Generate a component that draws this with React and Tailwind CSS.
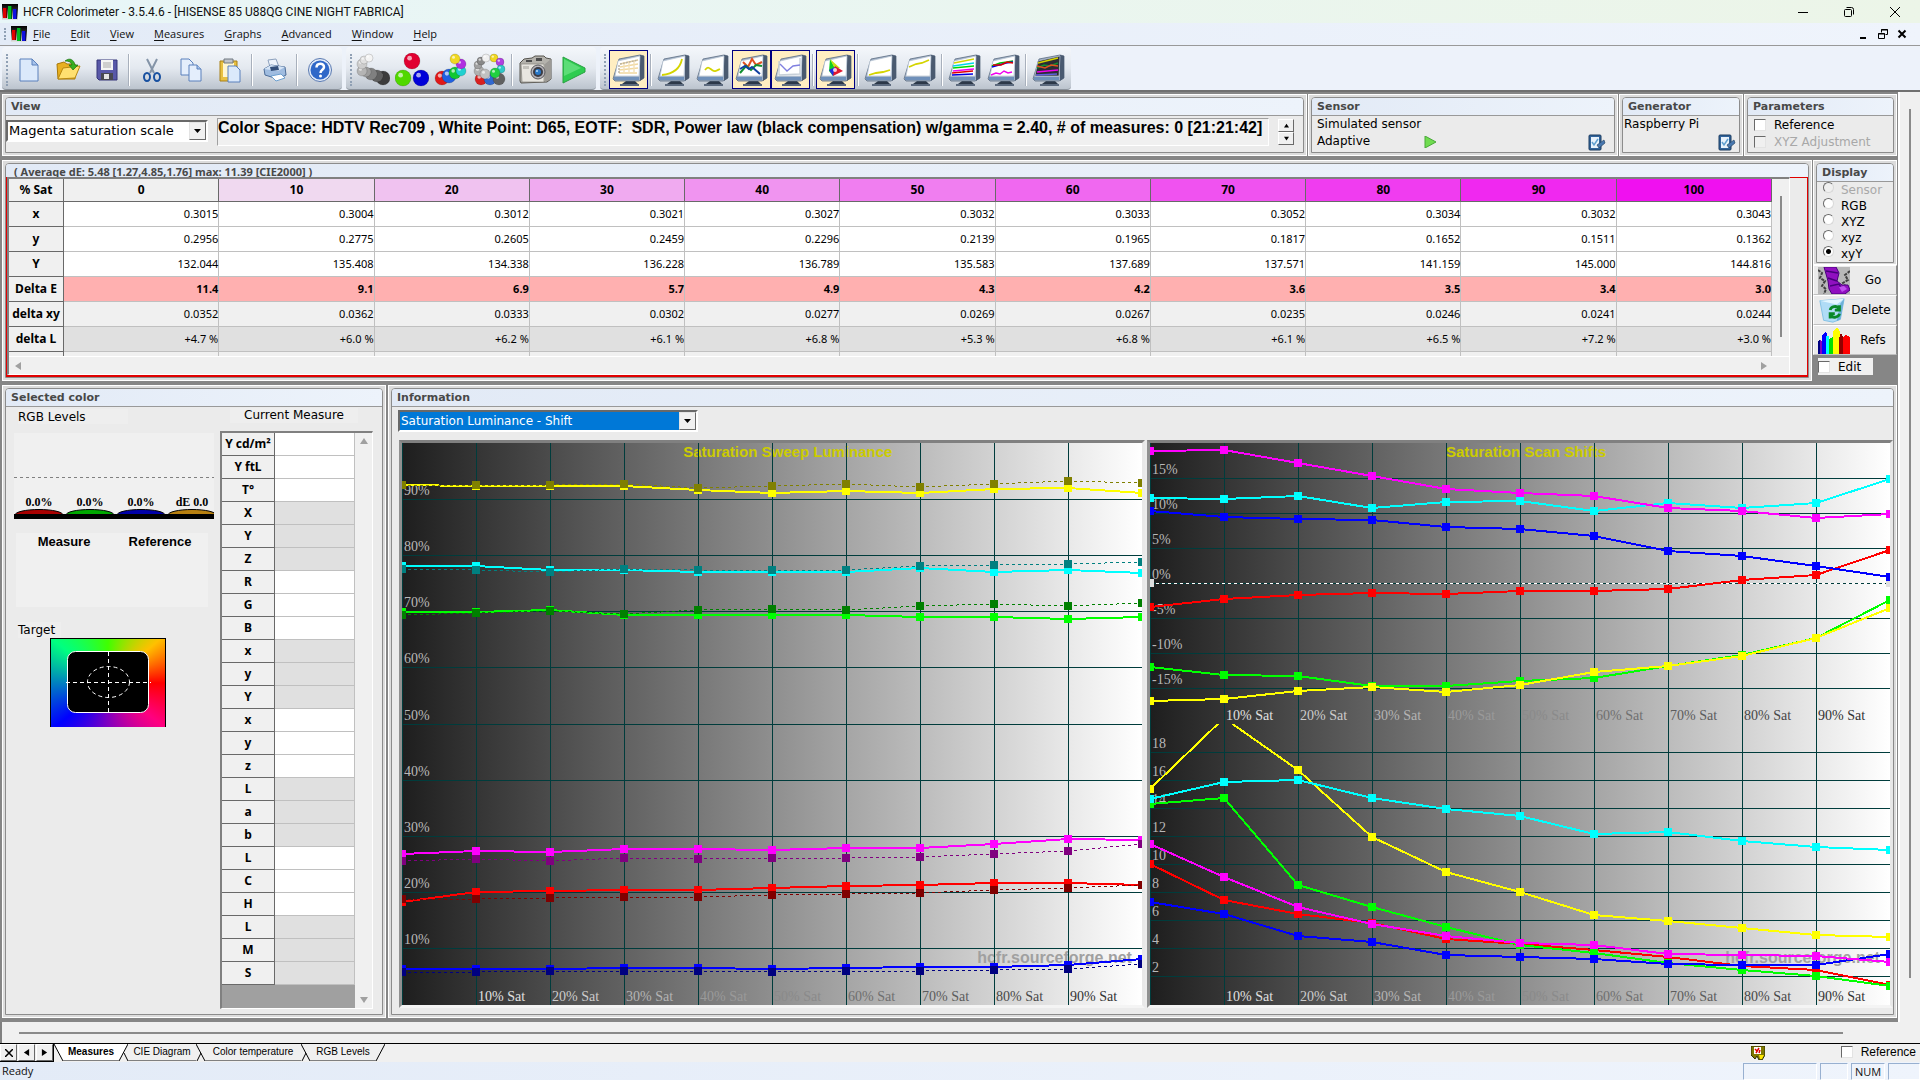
import { useState } from 'react';

const MEASURE_COLS = [
  { sat: 0, bg: 'bg-[#f0f0f0]', x: '0.3015', y: '0.2956', Y: '132.044', dE: '11.4', dxy: '0.0352', dL: '+4.7 %' },
  { sat: 10, bg: 'bg-[#f0d9f0]', x: '0.3004', y: '0.2775', Y: '135.408', dE: '9.1', dxy: '0.0362', dL: '+6.0 %' },
  { sat: 20, bg: 'bg-[#f0c2f0]', x: '0.3012', y: '0.2605', Y: '134.338', dE: '6.9', dxy: '0.0333', dL: '+6.2 %' },
  { sat: 30, bg: 'bg-[#f0aaf0]', x: '0.3021', y: '0.2459', Y: '136.228', dE: '5.7', dxy: '0.0302', dL: '+6.1 %' },
  { sat: 40, bg: 'bg-[#f094f0]', x: '0.3027', y: '0.2296', Y: '136.789', dE: '4.9', dxy: '0.0277', dL: '+6.8 %' },
  { sat: 50, bg: 'bg-[#f07ef0]', x: '0.3032', y: '0.2139', Y: '135.583', dE: '4.3', dxy: '0.0269', dL: '+5.3 %' },
  { sat: 60, bg: 'bg-[#f068f0]', x: '0.3033', y: '0.1965', Y: '137.689', dE: '4.2', dxy: '0.0267', dL: '+6.8 %' },
  { sat: 70, bg: 'bg-[#f052f0]', x: '0.3052', y: '0.1817', Y: '137.571', dE: '3.6', dxy: '0.0235', dL: '+6.1 %' },
  { sat: 80, bg: 'bg-[#f03cf0]', x: '0.3034', y: '0.1652', Y: '141.159', dE: '3.5', dxy: '0.0246', dL: '+6.5 %' },
  { sat: 90, bg: 'bg-[#f028f0]', x: '0.3032', y: '0.1511', Y: '145.000', dE: '3.4', dxy: '0.0241', dL: '+7.2 %' },
  { sat: 100, bg: 'bg-[#f010f0]', x: '0.3043', y: '0.1362', Y: '144.816', dE: '3.0', dxy: '0.0244', dL: '+3.0 %' },
];

const MEASURE_ROWS = [
  { key: 'x', label: 'x', cls: 'bg-white' },
  { key: 'y', label: 'y', cls: 'bg-white' },
  { key: 'Y', label: 'Y', cls: 'bg-white' },
  { key: 'dE', label: 'Delta E', cls: 'bg-[#ffb0b0] font-bold' },
  { key: 'dxy', label: 'delta xy', cls: 'bg-[#f0f0f0]' },
  { key: 'dL', label: 'delta L', cls: 'bg-[#e0e0e0]' },
];

const CURRENT_ROWS = ['Y cd/m²', 'Y ftL', 'T°', 'X', 'Y', 'Z', 'R', 'G', 'B', 'x', 'y', 'Y', 'x', 'y', 'z', 'L', 'a', 'b', 'L', 'C', 'H', 'L', 'M', 'S'];

const AXIS_COLORS = ['#e0e0e0', '#cccccc', '#b4b4b4', '#9a9a9a', '#8a8a8a', '#707070', '#5c5c5c', '#484848', '#333333'];

const LUMINANCE = [
  { color: '#ffff00', pts: [42, 43, 43, 43, 47, 50, 48, 50, 46, 45, 50] },
  { color: '#808000', dash: true, pts: [42, 42, 42, 41, 45, 43, 41, 44, 41, 38, 40] },
  { color: '#00ffff', pts: [123, 123, 127, 127, 129, 129, 129, 125, 129, 127, 130] },
  { color: '#008080', dash: true, pts: [126, 127, 129, 126, 127, 127, 127, 123, 122, 121, 119] },
  { color: '#00ff00', pts: [169, 169, 167, 172, 172, 172, 172, 174, 174, 176, 174] },
  { color: '#008000', dash: true, pts: [172, 170, 168, 171, 167, 166, 167, 163, 161, 163, 160] },
  { color: '#ff00ff', pts: [411, 408, 409, 406, 406, 407, 405, 405, 401, 396, 397] },
  { color: '#800080', dash: true, pts: [418, 416, 418, 415, 416, 415, 415, 414, 411, 408, 401] },
  { color: '#ff0000', pts: [459, 449, 448, 447, 447, 445, 443, 442, 440, 440, 442] },
  { color: '#800000', dash: true, pts: [456, 456, 455, 454, 454, 452, 451, 450, 447, 445, 442] },
  { color: '#0000ff', pts: [526, 526, 526, 525, 525, 526, 525, 524, 524, 522, 516] },
  { color: '#000080', dash: true, pts: [529, 529, 528, 528, 528, 529, 528, 528, 527, 526, 521] },
];

const SHIFTS = [
  { color: '#ff0000', pts: [164, 156, 152, 150, 151, 148, 148, 146, 137, 132, 107] },
  { color: '#00ff00', pts: [224, 232, 233, 243, 243, 238, 235, 223, 212, 195, 157] },
  { color: '#0000ff', pts: [68, 74, 76, 77, 84, 86, 93, 108, 113, 123, 134] },
  { color: '#ffff00', pts: [258, 256, 248, 244, 249, 242, 229, 223, 213, 195, 165] },
  { color: '#00ffff', pts: [55, 56, 53, 65, 59, 58, 68, 60, 65, 60, 36] },
  { color: '#ff00ff', pts: [8, 7, 20, 33, 46, 50, 53, 65, 68, 75, 71] },
];

const DELTA_E = [
  { color: '#ff0000', pts: [140, 176, 190, 199, 215, 220, 226, 233, 242, 246, 261] },
  { color: '#00ff00', pts: [80, 74, 161, 183, 203, 221, 229, 239, 246, 252, 262] },
  { color: '#0000ff', pts: [178, 190, 212, 218, 231, 233, 235, 240, 241, 241, 230] },
  { color: '#ffff00', pts: [65, -6, 46, 113, 148, 168, 191, 197, 204, 211, 213] },
  { color: '#00ffff', pts: [75, 58, 56, 74, 85, 92, 110, 108, 117, 123, 126] },
  { color: '#ff00ff', pts: [120, 153, 183, 200, 212, 219, 221, 230, 231, 232, 238] },
];

const LUM_GRID = [90, 80, 70, 60, 50, 40, 30, 20, 10].map((v, i) => ({ label: `${v}%`, y: 56 * (i + 1) + (i > 3 ? 1 : 0) }));
const SHIFT_GRID = [15, 10, 5, 0, -5, -10, -15].map((v, i) => ({ label: `${v}%`, y: 35 + 35 * i }));
const DE_GRID = [18, 16, 14, 12, 10, 8, 6, 4, 2].map((v, i) => ({ label: `${v}`, y: 28 + 28 * i }));

/* ---------- charts ---------- */

function Series({ color, dash, pts }) {
  return (
    <g fill={color} stroke={color} shapeRendering="crispEdges">
      {pts.slice(1).map((y, i) => (
        <line
          key={i}
          x1={`${i * 10}%`}
          y1={pts[i]}
          x2={`${(i + 1) * 10}%`}
          y2={y}
          strokeWidth={dash ? 1 : 2}
          strokeDasharray={dash ? '3 3' : undefined}
        />
      ))}
      {pts.map((y, i) => (
        <rect key={i} x={`${i * 10}%`} y={y - 4} width="8" height="8" stroke="none" transform="translate(-4 0)" />
      ))}
    </g>
  );
}

function Plot({ title, titleX, grid, series, height, zeroLine, watermark, id, label }) {
  return (
    <svg className="block w-full" height={height} role="img" aria-label={label}>
      <defs>
        <linearGradient id={id}>
          <stop offset="0" stopColor="#1e1e1e" />
          <stop offset="1" stopColor="#ffffff" />
        </linearGradient>
      </defs>
      <rect width="100%" height="100%" fill={`url(#${id})`} />
      {title && (
        <text x={titleX} y="14" fill="#cccc00" className="font-['Liberation_Sans',sans-serif] text-[15px] font-bold">
          {title}
        </text>
      )}
      {watermark && (
        <text x="78%" y={height - 42} dx="-2" fill="#a0a0a0" className="font-['Liberation_Sans',sans-serif] text-base font-bold">
          hcfr.sourceforge.net
        </text>
      )}
      <g stroke="#003c3c" shapeRendering="crispEdges">
        {[0, 1, 2, 3, 4, 5, 6, 7, 8, 9].map((i) => (
          <line key={i} x1={`${i * 10}%`} x2={`${i * 10}%`} y1="0" y2={height} />
        ))}
        {grid.map((g) => (
          <line key={g.label} x1="0" x2="100%" y1={g.y} y2={g.y} />
        ))}
      </g>
      {zeroLine && (
        <g shapeRendering="crispEdges">
          <line x1="0" x2="100%" y1={zeroLine} y2={zeroLine} stroke="#ffffff" strokeDasharray="3 3" />
          <rect x="0" y={zeroLine - 4} width="4" height="8" fill="#e0e0e0" />
          <rect x="100%" y={zeroLine - 4} width="4" height="8" fill="#e0e0e0" transform="translate(-4 0)" />
        </g>
      )}
      <g className="font-['Liberation_Serif',serif] text-sm">
        {grid.map((g) => (
          <text key={g.label} x="2" y={g.y - 4} fill="#b8b8b8">
            {g.label}
          </text>
        ))}
        {AXIS_COLORS.map((c, i) => (
          <text key={c} x={`${(i + 1) * 10}%`} dx="2" y={height - 4} fill={c}>
            {`${(i + 1) * 10}% Sat`}
          </text>
        ))}
      </g>
      {series.map((s) => (
        <Series key={s.color} {...s} />
      ))}
    </svg>
  );
}

/* ---------- small building blocks ---------- */

function Panel({ title, className = '', bodyClass = '', children }) {
  return (
    <section className={`flex flex-col border border-white bg-[#dcdcdc] p-[2px] ${className}`}>
      <div className="flex flex-1 flex-col rounded-t-[4px] border border-[#8c8c8c] bg-[#ebebeb]">
        <h2 className="h-[18px] rounded-t-[3px] border-b border-[#999] bg-gradient-to-r from-[#e2eaf6] to-[#edf3fb] pl-[5px] text-[11px] leading-[18px] font-bold text-[#484848]">
          {title}
        </h2>
        <div className={`flex-1 ${bodyClass}`}>{children}</div>
      </div>
    </section>
  );
}

function CheckBox({ label, disabled, className = '' }) {
  return (
    <label className={`flex items-center gap-2 ${disabled ? 'text-[#a8a8a8]' : ''} ${className}`}>
      <input
        type="checkbox"
        disabled={disabled}
        className={`h-3 w-3 shrink-0 appearance-none border border-t-[#696969] border-r-[#e3e3e3] border-b-[#e3e3e3] border-l-[#696969] ${disabled ? 'bg-[#f0f0f0]' : 'bg-white checked:bg-[#404040]'}`}
      />
      {label}
    </label>
  );
}

function Combo({ label, options, className = '', selectClass = '' }) {
  return (
    <div className={`relative h-[22px] border-2 border-t-[#696969] border-r-white border-b-white border-l-[#696969] bg-white ${className}`}>
      <select aria-label={label} className={`block h-[18px] w-full appearance-none leading-[18px] outline-none ${selectClass}`}>
        {options.map((o) => (
          <option key={o}>{o}</option>
        ))}
      </select>
      <span className="pointer-events-none absolute top-0 right-0 flex h-[18px] w-[17px] items-center justify-center border border-t-[#e3e3e3] border-r-[#696969] border-b-[#696969] border-l-[#e3e3e3] bg-[#f0f0f0]">
        <svg width="7" height="4" viewBox="0 0 7 4">
          <path d="M0 0h7L3.500 4z" />
        </svg>
      </span>
    </div>
  );
}

function Arrow({ dir, color = '#a0a0a0', size = 8 }) {
  const d = {
    left: 'M7 0v8L1 4z',
    right: 'M1 0v8l6-4z',
    up: 'M0 7h8L4 1z',
    down: 'M0 1h8L4 7z',
  }[dir];
  return (
    <svg width={size} height={size} viewBox="0 0 8 8" fill={color}>
      <path d={d} />
    </svg>
  );
}

/* ---------- icons ---------- */

function AppLogo({ id }) {
  return (
    <svg width="16" height="16" viewBox="0 0 16 16">
      <defs>
        <linearGradient id={id} x1="0" y1="0" x2="0" y2="1">
          <stop offset="0" stopColor="#000" />
          <stop offset=".3" stopColor="#222" />
          <stop offset="1" stopColor="#e8e8e8" />
        </linearGradient>
      </defs>
      <rect width="16" height="16" fill={`url(#${id})`} />
      <path d="M1 4h4v10H1z" fill="#e00000" />
      <path d="M6 2h4v13H6z" fill="#00b820" />
      <path d="M11 5h4v10h-4z" fill="#1010e0" />
      <path d="M4 4h1v10H4zM9 2h1v13H9zM14 5h1v10h-1z" fill="#000" opacity=".5" />
    </svg>
  );
}

function Spheres({ balls }) {
  return (
    <svg width="34" height="34" viewBox="0 0 34 34">
      {balls.map(([cx, cy, r, c], i) => (
        <g key={i}>
          <circle cx={cx} cy={cy} r={r} fill={c} stroke="#000" strokeOpacity=".25" strokeWidth=".6" />
          <circle cx={cx - r * 0.3} cy={cy - r * 0.35} r={r * 0.3} fill="#fff" opacity=".65" />
        </g>
      ))}
    </svg>
  );
}

const GRAY_BALLS = [[27, 25, 7, '#3c3c3c'], [21, 23, 6, '#606060'], [15, 21, 6, '#808080'], [10, 19, 5, '#9c9c9c'], [6, 18, 5, '#b4b4b4'], [6, 11, 5, '#cdcdcd'], [8, 7, 4, '#e0e0e0'], [13, 5, 4, '#f4f4f4']];
const RGB_BALLS = [[17, 8, 8, '#e00030'], [8, 25, 8, '#50d800'], [26, 25, 8, '#0000d8']];
const COLOR_BALLS = [[8, 25, 7, '#e01818'], [15, 23, 7, '#2060e0'], [21, 20, 6, '#10c830'], [27, 18, 5, '#20d0d0'], [27, 11, 5, '#b030e0'], [21, 6, 5, '#f0d820']];
const RING_BALLS = [[8, 26, 6, '#d82020'], [17, 26, 6, '#3068d0'], [26, 26, 6, '#606060'], [6, 18, 5, '#b0b0b0'], [5, 12, 4, '#a0a0a0'], [8, 8, 4, '#888888'], [13, 5, 4, '#f0f0f0'], [21, 5, 4, '#f0d820'], [27, 9, 4, '#b040e0'], [28, 16, 4, '#30c8c8'], [22, 20, 5, '#20d040'], [12, 21, 5, '#c0c0c0']];

function Monitor({ dark, children }) {
  return (
    <svg width="34" height="34" viewBox="0 0 34 34">
      <path d="M10 31h16l-3-3h-9z" fill="#2c3848" />
      <path d="M8 31h19v2H8z" fill="#5c6a7e" />
      <path d="M7 6L28 2l4 1v22l-5 3H3L1 26z" fill="#9fb0c6" stroke="#5c6c82" strokeWidth=".8" />
      <path d="M28 2l4 1v22l-4 3z" fill="#4a5a70" />
      <path d="M2 24h25v3H2z" fill="#6f90ba" />
      <path d="M6 8l22-5-1 20H3z" fill={dark ? '#2c2c34' : '#ffffff'} stroke="#b8c4d2" strokeWidth=".7" />
      <g fill="none" strokeWidth="1.400">{children}</g>
    </svg>
  );
}

const monitorArt = {
  measures: (
    <>
      <path d="M8 11l18-4M8 14l18-3M7 17l19-2M7 20h18" stroke="#f0d8a0" />
      <path d="M12 9v12M17 8v12M22 7v13" stroke="#f4e2b8" />
      <path d="M8 11l18-4M7 12v9" stroke="#b8b0a0" strokeDasharray="2 1" />
    </>
  ),
  luminance: <path d="M5 22c10-1 18-6 20-16" stroke="#d4d400" strokeWidth="1.800" />,
  gamma: <path d="M9 17c3-4 4-2 7 0s4 1 8-1" stroke="#d4d400" strokeWidth="1.800" />,
  rgb: (
    <>
      <path d="M8 9l5 5 4-8 4 6 6-3" stroke="#e05020" strokeWidth="2" />
      <path d="M5 20l6-7 5 4 5-5 6 1" stroke="#109030" strokeWidth="2" />
      <path d="M5 16l5-3 4 3 3-2 8 7" stroke="#1040a0" strokeWidth="2" />
    </>
  ),
  temp: (
    <>
      <path d="M5 22V8m0 14l21-1V5" stroke="#c8d0d8" />
      <path d="M6 11l5 5 2 2 6-5 7-1" stroke="#8080e0" />
    </>
  ),
  nearBlack: <path d="M5 22l7-2 7-1 7-2" stroke="#d4d400" strokeWidth="1.800" />,
  nearWhite: <path d="M6 14l7-3 6-1 7-3" stroke="#d4d400" strokeWidth="1.800" />,
  lumAll: (
    <>
      <path d="M6 10l20-4" stroke="#d4d400" />
      <path d="M5 13l21-3" stroke="#00d8e8" />
      <path d="M5 15l21-2" stroke="#00d800" />
      <path d="M5 18l21-2" stroke="#f000f0" />
      <path d="M4 20l21-2" stroke="#e00000" />
      <path d="M4 22l21-1" stroke="#0000e0" />
    </>
  ),
  shiftAll: (
    <>
      <path d="M5 13l8-3 7-1 6-1" stroke="#00c000" />
      <path d="M5 14l7-2 7-2 7-1" stroke="#0000e0" />
      <path d="M6 12l8 0 6-3 6 1" stroke="#e00000" />
      <path d="M4 22l5-2 4 1 4-3 4 2 4-1" stroke="#f000f0" />
    </>
  ),
  combo: (
    <>
      <path d="M6 10l20-5" stroke="#d4d400" />
      <path d="M5 15l7-3 6 1 8-3" stroke="#109030" />
      <path d="M5 13l8 2 6-3 7 1" stroke="#e05020" />
      <path d="M5 19l21-2" stroke="#f000f0" />
      <path d="M4 22l21-1" stroke="#6060e0" />
    </>
  ),
};

function CieMonitor() {
  return (
    <Monitor>
      <path d="M11 6l-1 12 4 5 2-8z" fill="#10d020" stroke="none" />
      <path d="M11 6l10 9-5 1z" fill="#c8e010" stroke="none" />
      <path d="M10 17l4 6 4-4-2-5z" fill="#2030e0" stroke="none" />
      <path d="M16 13l8 5-10 5z" fill="#e01830" stroke="none" />
      <circle cx="16" cy="17" r="2" fill="#fff" opacity=".8" stroke="none" />
    </Monitor>
  );
}

const fileIcons = {
  New: (
    <svg width="22" height="26" viewBox="0 0 22 26">
      <path d="M2 2h12l6 6v16H2z" fill="#dbe9fb" stroke="#5a80bc" />
      <path d="M14 2l6 6h-6z" fill="#a8c4ec" stroke="#5a80bc" />
    </svg>
  ),
  Open: (
    <svg width="26" height="26" viewBox="0 0 26 26">
      <path d="M2 7l7-2 3 2h8v15H3z" fill="#e8b020" stroke="#a87808" />
      <path d="M3 22l5-11 17-2-5 12z" fill="#ffe070" stroke="#b88810" />
      <path d="M10 4c5-4 9-1 10 4h3l-5 5-4-5h3c-1-3-3-4-7-4z" fill="#38b020" stroke="#187010" strokeWidth=".7" />
    </svg>
  ),
  Save: (
    <svg width="24" height="24" viewBox="0 0 24 24">
      <path d="M2 2h20v20H4l-2-2z" fill="#5858a8" stroke="#343478" />
      <path d="M6 2h12v10H6z" fill="#f4f4f4" />
      <path d="M8 5h8M8 7h8M8 9h8" stroke="#a8a8a8" />
      <path d="M6 15h12v7H6z" fill="#484850" />
      <path d="M9 16h5v5H9z" fill="#e4e4e4" />
    </svg>
  ),
  Cut: (
    <svg width="20" height="26" viewBox="0 0 20 26" fill="none">
      <path d="M5 2l7 14M15 2L8 16" stroke="#8494a8" strokeWidth="2" />
      <ellipse cx="5" cy="20" rx="3" ry="4" stroke="#1850a0" strokeWidth="2" />
      <ellipse cx="15" cy="20" rx="3" ry="4" stroke="#1850a0" strokeWidth="2" />
    </svg>
  ),
  Copy: (
    <svg width="24" height="26" viewBox="0 0 24 26" fill="#e4eefc" stroke="#5a80bc">
      <path d="M2 2h8l4 4v12H2z" />
      <path d="M10 8h8l4 4v12H10z" />
      <path d="M18 8v4h4" fill="#a8c4ec" />
    </svg>
  ),
  Paste: (
    <svg width="24" height="26" viewBox="0 0 24 26">
      <path d="M2 4h17v20H2z" fill="#e8c040" stroke="#a88018" />
      <path d="M5 6h11v14H5z" fill="#fff6d0" />
      <path d="M6 2h9v4H6z" fill="#c0c4cc" stroke="#707880" />
      <path d="M10 9h8l4 4v12H10z" fill="#dbe9fb" stroke="#5a80bc" />
    </svg>
  ),
  Print: (
    <svg width="26" height="24" viewBox="0 0 26 24">
      <path d="M6 2l8-1 3 8H8z" fill="#eef4fc" stroke="#8ca0bc" />
      <path d="M2 11l7-4 14 2 1 8-8 4-13-4z" fill="#9fbce0" stroke="#4c6c98" />
      <path d="M2 11l7-4 14 2-7 4z" fill="#d4e4f6" />
      <path d="M8 9l8-1 1 4-8 1z" fill="#34507c" />
      <path d="M9 18l10-2 4 4-9 3z" fill="#fff" stroke="#6ca0d0" />
    </svg>
  ),
  Help: (
    <svg width="26" height="26" viewBox="0 0 26 26">
      <circle cx="13" cy="13" r="11.500" fill="#e4ecf8" stroke="#5878b0" />
      <circle cx="13" cy="13" r="9.500" fill="#3068c8" />
      <path d="M9.500 10.500c0-5 7.500-5 7.500-.5 0 3-3.500 2.500-3.500 6" fill="none" stroke="#fff" strokeWidth="2.500" />
      <circle cx="13.500" cy="19" r="1.500" fill="#fff" />
    </svg>
  ),
  Camera: (
    <svg width="34" height="32" viewBox="0 0 34 32">
      <path d="M2 9l4-4 8-1 3-2h9l2 2 5 1v20l-4 3-26 1-1-2z" fill="#b4b2ac" stroke="#54524c" />
      <path d="M3 10h23v18H4z" fill="#e8e6e0" stroke="#84827c" strokeWidth=".7" />
      <path d="M27 10l6-5v20l-6 3z" fill="#9c9a96" />
      <path d="M8 6h6v2H8zM18 4h6v3h-6z" fill="#4c4c4c" />
      <path d="M5 12h6v3H5z" fill="#c4c2bc" />
      <circle cx="20" cy="18" r="7" fill="#b4b2b8" stroke="#5a5a5e" />
      <circle cx="20" cy="18" r="5" fill="#3c3c44" />
      <circle cx="20" cy="18" r="3" fill="#2878c8" />
      <circle cx="19" cy="17" r="1" fill="#b8dcf8" />
    </svg>
  ),
  Run: (
    <svg width="26" height="28" viewBox="0 0 26 28">
      <path d="M2 1l22 11v4L2 27z" fill="#2ecc50" stroke="#28a040" />
      <path d="M3 3l17 9L3 20z" fill="#70e488" opacity=".7" />
    </svg>
  ),
};

function ToolButton({ name, active, children }) {
  return (
    <button
      aria-label={name}
      className={`flex h-[39px] w-[39px] shrink-0 items-center justify-center ${active ? 'border border-[#000080] bg-[#ffeec2]' : ''}`}
    >
      {children}
    </button>
  );
}

function ToolSep() {
  return (
    <div className="flex h-8 w-[6px] shrink-0 justify-center">
      <div className="w-px bg-[#a8b0bc]" />
      <div className="w-px bg-white" />
    </div>
  );
}

function ToolGroup({ children }) {
  return (
    <div className="flex h-[43px] items-center rounded border-b border-[#8c939c] bg-gradient-to-b from-[#f4f7fb] via-[#e4e9f0] to-[#bcc4ce] pt-[3px] pr-[3px] pl-[4px]">
      <div className="mr-px h-8 border-l-2 border-dotted border-[#90a0b4]" />
      {children}
    </div>
  );
}

function PropsIcon() {
  return (
    <svg width="18" height="18" viewBox="0 0 18 18">
      <rect x="1" y="1" width="12" height="15" rx="1" fill="#30649c" stroke="#1c3c60" />
      <path d="M3 3h8v11H3z" fill="#e8f2fc" />
      <path d="M4 8l2 3 4-6" fill="none" stroke="#60a0d0" strokeWidth="1.500" />
      <path d="M9 11l7-5 1 3-6 5z" fill="#4878b0" stroke="#284868" strokeWidth=".7" />
    </svg>
  );
}

/* ---------- page sections ---------- */

function TitleBar() {
  return (
    <header className="flex h-[23px] items-center bg-gradient-to-r from-[#e8f6f8] to-[#ecf5e8] pr-[19px] pl-[2px] font-[Roboto,'Noto_Sans',sans-serif] text-xs text-[#101010]">
      <AppLogo id="logo-title" />
      <h1 className="ml-[5px] flex-1">HCFR Colorimeter - 3.5.4.6 - [HISENSE 85 U88QG CINE NIGHT FABRICA]</h1>
      <div className="flex gap-[34px]">
        <button aria-label="Minimize">
          <svg width="12" height="12" viewBox="0 0 12 12" stroke="#000"><path d="M1 6.500h10" /></svg>
        </button>
        <button aria-label="Restore">
          <svg width="12" height="12" viewBox="0 0 12 12" fill="none" stroke="#000">
            <rect x="1.500" y="3.500" width="7" height="7" rx="1" />
            <path d="M3.500 1.500h5a2 2 0 0 1 2 2v5" />
          </svg>
        </button>
        <button aria-label="Close">
          <svg width="12" height="12" viewBox="0 0 12 12" stroke="#000"><path d="M1 1l10 10M11 1L1 11" /></svg>
        </button>
      </div>
    </header>
  );
}

function MenuBar() {
  return (
    <nav className="flex h-[23px] items-center border-b border-[#999] bg-gradient-to-r from-[#e3ebf7] to-[#eff4fc] pr-[13px] pl-[4px] text-[#101010]">
      <div className="mr-[5px] h-3 border-l-2 border-dotted border-[#90a0b4]" />
      <AppLogo id="logo-menu" />
      <ul className="ml-[6px] flex flex-1 gap-5 font-['Open_Sans','Noto_Sans',sans-serif] text-[11px]">
        {['File', 'Edit', 'View', 'Measures', 'Graphs', 'Advanced', 'Window', 'Help'].map((m) => (
          <li key={m}>
            <button><u className="underline-offset-2">{m[0]}</u>{m.slice(1)}</button>
          </li>
        ))}
      </ul>
      <div className="flex gap-[9px]">
        <button aria-label="Minimize document">
          <svg width="10" height="10" viewBox="0 0 10 10"><path d="M1 8h6v2H1z" /></svg>
        </button>
        <button aria-label="Restore document">
          <svg width="10" height="10" viewBox="0 0 10 10" fill="none" stroke="#000">
            <path d="M3.500 3.500v-3h6v5h-2M3 1h7" />
            <path d="M.5 4.500h6v5h-6zM0 5h7" />
          </svg>
        </button>
        <button aria-label="Close document">
          <svg width="10" height="10" viewBox="0 0 10 10" stroke="#000" strokeWidth="2"><path d="M1.500 1.500l7 7M8.500 1.500l-7 7" /></svg>
        </button>
      </div>
    </nav>
  );
}

function Toolbar() {
  return (
    <div className="flex h-[44px] gap-[4px] bg-[#edf2fa] pt-px pl-[2px]">
      <ToolGroup>
        <ToolButton name="New">{fileIcons.New}</ToolButton>
        <ToolButton name="Open">{fileIcons.Open}</ToolButton>
        <ToolButton name="Save">{fileIcons.Save}</ToolButton>
        <ToolSep />
        <ToolButton name="Cut">{fileIcons.Cut}</ToolButton>
        <ToolButton name="Copy">{fileIcons.Copy}</ToolButton>
        <ToolButton name="Paste">{fileIcons.Paste}</ToolButton>
        <ToolSep />
        <ToolButton name="Print">{fileIcons.Print}</ToolButton>
        <ToolSep />
        <ToolButton name="Help">{fileIcons.Help}</ToolButton>
      </ToolGroup>
      <ToolGroup>
        <ToolButton name="Measure grays"><Spheres balls={GRAY_BALLS} /></ToolButton>
        <ToolButton name="Measure primaries"><Spheres balls={RGB_BALLS} /></ToolButton>
        <ToolButton name="Measure saturations"><Spheres balls={COLOR_BALLS} /></ToolButton>
        <ToolButton name="Measure all"><Spheres balls={RING_BALLS} /></ToolButton>
        <ToolSep />
        <ToolButton name="Capture">{fileIcons.Camera}</ToolButton>
        <ToolButton name="Run">{fileIcons.Run}</ToolButton>
      </ToolGroup>
      <ToolGroup>
        <div className="w-[2px]" />
        <ToolButton name="Measures view" active><Monitor>{monitorArt.measures}</Monitor></ToolButton>
        <ToolSep />
        <ToolButton name="Luminance"><Monitor>{monitorArt.luminance}</Monitor></ToolButton>
        <ToolButton name="Gamma"><Monitor>{monitorArt.gamma}</Monitor></ToolButton>
        <ToolButton name="RGB levels" active><Monitor>{monitorArt.rgb}</Monitor></ToolButton>
        <ToolButton name="Color temperature" active><Monitor>{monitorArt.temp}</Monitor></ToolButton>
        <ToolSep />
        <ToolButton name="CIE diagram" active><CieMonitor /></ToolButton>
        <ToolSep />
        <ToolButton name="Near black"><Monitor>{monitorArt.nearBlack}</Monitor></ToolButton>
        <ToolButton name="Near white"><Monitor>{monitorArt.nearWhite}</Monitor></ToolButton>
        <ToolSep />
        <ToolButton name="Saturation luminance"><Monitor>{monitorArt.lumAll}</Monitor></ToolButton>
        <ToolButton name="Saturation shift"><Monitor>{monitorArt.shiftAll}</Monitor></ToolButton>
        <ToolSep />
        <ToolButton name="Combined graphs"><Monitor dark>{monitorArt.combo}</Monitor></ToolButton>
      </ToolGroup>
    </div>
  );
}

function TopRow() {
  return (
    <div className="flex h-[62px] gap-px text-xs">
      <Panel title="View" className="min-w-0 flex-1" bodyClass="flex items-start gap-[9px] pt-[2px] pr-[9px]">
        <Combo
          label="View"
          className="mt-[2px] w-[202px] shrink-0"
          selectClass="pl-[1px] text-[13px]"
          options={['Magenta saturation scale', 'Grayscale', 'Primaries and secondaries']}
        />
        <div className="h-7 min-w-0 flex-1 overflow-hidden border border-t-[#a0a0a0] border-r-white border-b-white border-l-[#a0a0a0] bg-[#f0f0f0] font-['Liberation_Sans',Arial,sans-serif] text-base leading-[18px] font-bold whitespace-pre text-black">
          {'Color Space: HDTV Rec709 , White Point: D65, EOTF:  SDR, Power law (black compensation) w/gamma = 2.40, # of measures: 0 [21:21:42]'}
        </div>
        <div className="mt-[1px] flex w-4 flex-col">
          {['up', 'down'].map((d) => (
            <button
              key={d}
              aria-label={`Scroll ${d}`}
              className="flex h-[13px] items-center justify-center border border-t-white border-r-[#696969] border-b-[#696969] border-l-white bg-[#f0f0f0]"
            >
              <Arrow dir={d} color="#000" size={5} />
            </button>
          ))}
        </div>
      </Panel>
      <Panel title="Sensor" className="w-[310px] shrink-0" bodyClass="flex justify-between pr-2 pl-[5px] leading-[17px]">
        <div>
          <p>Simulated sensor</p>
          <p className="flex items-center gap-[54px]">
            Adaptive
            <svg width="13" height="12" viewBox="0 0 13 12"><path d="M1 0l11 6-11 6z" fill="#70dc50" stroke="#48a838" /></svg>
          </p>
        </div>
        <button aria-label="Sensor properties" className="self-end"><PropsIcon /></button>
      </Panel>
      <Panel title="Generator" className="w-[124px] shrink-0" bodyClass="flex justify-between leading-[17px]">
        <p className="pl-[1px] whitespace-nowrap">Raspberry Pi</p>
        <button aria-label="Generator properties" className="self-end pr-[3px]"><PropsIcon /></button>
      </Panel>
      <Panel title="Parameters" className="w-[153px] shrink-0" bodyClass="flex flex-col gap-[1px] pt-[1px] pl-[6px] leading-4">
        <CheckBox label="Reference" />
        <CheckBox label="XYZ Adjustment" disabled />
      </Panel>
    </div>
  );
}

function MeasureTable() {
  return (
    <section className="flex min-w-0 flex-1 flex-col border border-white bg-[#dcdcdc] p-[2px]">
      <div className="flex flex-1 flex-col rounded-t-[4px] border border-[#8c8c8c] bg-[#ebebeb]">
        <h2 className="h-[13px] rounded-t-[3px] bg-gradient-to-r from-[#e2eaf6] to-[#edf3fb] pl-2 font-['Noto_Sans','Open_Sans',sans-serif] text-[11px] leading-[15px] font-bold text-[#484848]">
          ( Average dE: 5.48 [1.27,4.85,1.76] max: 11.39 [CIE2000] )
        </h2>
        <div className="flex-1 border border-b-2 border-[#e00000]">
          <div className="-mt-px mr-[17px] border-t-2 border-r border-b border-l-2 border-t-[#808080] border-r-white border-b-white border-l-[#808080] bg-[#f0f0f0] font-['Noto_Sans','Open_Sans',sans-serif] text-[11px]">
            <div className="flex">
              <div className="h-[177px] min-w-0 flex-1 overflow-hidden">
                <table className="w-full table-fixed border-separate border-spacing-0">
                  <thead>
                    <tr className="h-[23px]">
                      <th className="w-[55px] border-r border-b border-[#696969] bg-[#f0f0f0] text-xs">% Sat</th>
                      {MEASURE_COLS.map((c) => (
                        <th key={c.sat} className={`border-r border-b border-[#696969] text-xs ${c.bg}`}>{c.sat}</th>
                      ))}
                    </tr>
                  </thead>
                  <tbody>
                    {MEASURE_ROWS.map((r) => (
                      <tr key={r.key} className="h-[25px]">
                        <th className="border-r border-b border-[#696969] bg-[#f0f0f0] p-0 text-xs">{r.label}</th>
                        {MEASURE_COLS.map((c) => (
                          <td key={c.sat} className={`border-r border-b border-[#c0c0c0] p-0 text-right ${r.cls}`}>
                            {c[r.key]}
                          </td>
                        ))}
                      </tr>
                    ))}
                    <tr className="h-[25px]">
                      <th className="border-r border-[#696969]" />
                      {MEASURE_COLS.map((c) => (
                        <td key={c.sat} className="border-r border-[#c0c0c0]" />
                      ))}
                    </tr>
                  </tbody>
                </table>
              </div>
              <div className="flex w-[17px] justify-center pt-[17px]">
                <div className="h-[141px] w-[2px] bg-[#8a8a8a]" />
              </div>
            </div>
            <div className="flex h-[18px] items-center justify-between border-t border-white pr-[21px] pl-[5px]">
              <Arrow dir="left" />
              <Arrow dir="right" />
            </div>
          </div>
        </div>
      </div>
    </section>
  );
}

function DisplayColumn() {
  const [mode, setMode] = useState('xyY');
  const btn = 'flex h-[30px] items-center border border-t-white border-r-[#8c8c8c] border-b-[#c0c0c0] border-l-white bg-[#ebebeb] pl-1';
  return (
    <div className="flex w-[84px] shrink-0 flex-col text-xs">
      <Panel title="Display" className="h-[105px]" bodyClass="pl-[6px]">
        {['Sensor', 'RGB', 'XYZ', 'xyz', 'xyY'].map((m) => (
          <label key={m} className={`flex h-4 items-start gap-[7px] leading-4 ${m === 'Sensor' ? 'text-[#a8a8a8]' : ''}`}>
            <input
              type="radio"
              name="display"
              disabled={m === 'Sensor'}
              checked={mode === m}
              onChange={() => setMode(m)}
              className="h-[11px] w-[11px] appearance-none rounded-full border border-t-[#696969] border-r-[#d8d8d8] border-b-[#d8d8d8] border-l-[#696969] bg-white checked:bg-[radial-gradient(circle,#000_2px,#fff_3px)] disabled:bg-[#f0f0f0]"
            />
            {m}
          </label>
        ))}
      </Panel>
      <button className={btn}>
        <svg width="32" height="27" viewBox="0 0 32 27">
          <rect width="32" height="27" fill="#b8b8b8" />
          <path d="M0 3l4 3-2 5 5 3-3 5 4 3-2 5M32 4l-5 4 3 5-5 3 4 5-4 5" fill="none" stroke="#404040" strokeWidth="2" strokeDasharray="3 1" />
          <path d="M6 0h12l3 6-2 8 5 4h6l2 5-5 4H14l-3-5-1-8z" fill="#9010c0" stroke="#48007c" />
          <path d="M8 4l12 2M10 11l9 3M12 19l9-2 4 7" fill="none" stroke="#48007c" strokeWidth="1.500" />
          <path d="M21 20l5-1 3 3-5 3z" fill="#c050f0" />
        </svg>
        <span className="flex-1 text-center">Go</span>
      </button>
      <button className={btn}>
        <svg width="28" height="27" viewBox="0 0 30 27">
          <path d="M2 3l26-2-4 22-8 3-10-2z" fill="#b0dcf6" stroke="#80c0e4" />
          <path d="M2 3l26-2-8 6z" fill="#e4f6ff" />
          <path d="M28 1l-4 22-4 2 4-19z" fill="#6cb0d8" />
          <path
            d="M13 13c1-4 7-5 9-2M23 8v5h-5M23 17c-1 4-7 5-9 2M13 22v-5h5"
            fill="none"
            stroke="#088828"
            strokeWidth="3"
          />
        </svg>
        <span className="flex-1 text-center">Delete</span>
      </button>
      <button className={btn}>
        <svg width="32" height="27" viewBox="0 0 32 27" shapeRendering="crispEdges">
          <path d="M0 14l2-1v14H0z" fill="#000080" />
          <path d="M2 13l3 2v12H2z" fill="#8000c0" />
          <path d="M4 9l4-5 1 4v19H4z" fill="#0000ff" />
          <path d="M8 9h3v18H8z" fill="#00ffff" />
          <path d="M11 12l4-2v17h-4z" fill="#00e000" />
          <path d="M15 5l3-4 3 1 2 6v19h-8z" fill="#ffff00" />
          <path d="M21 12l2-6 2 4v17h-4z" fill="#900000" />
          <path d="M25 10l3-2 4 2v17h-7z" fill="#ff0000" />
        </svg>
        <span className="flex-1 text-center">Refs</span>
      </button>
      <CheckBox label="Edit" className="mt-[3px] ml-[5px] h-[17px] w-[55px] bg-[#f0f0f0]" />
    </div>
  );
}

function RgbLevels() {
  const bars = [
    { t: '0.0%', c: '#a80000' },
    { t: '0.0%', c: '#00a800' },
    { t: '0.0%', c: '#0000a8' },
    { t: 'dE 0.0', c: '#b88010' },
  ];
  return (
    <svg className="mt-[9px] block bg-[#f0f0f0]" width="200" height="86" viewBox="0 0 200 86">
      <path d="M0 44.500h200" stroke="#808080" strokeDasharray="3 3" />
      {bars.map((b, i) => (
        <g key={b.c}>
          <path d={`M${1 + 51 * i} 82a24 5.500 0 0 1 48 0z`} fill={b.c} stroke="#000" />
          <text x={25 + 51 * i} y="73" textAnchor="middle" className="font-['Liberation_Serif',serif] text-xs font-bold">{b.t}</text>
        </g>
      ))}
      <path d="M0 81h200v5H0z" />
    </svg>
  );
}

function SelectedColor() {
  return (
    <Panel title="Selected color" className="w-[384px] shrink-0" bodyClass="flex pr-[9px] pl-2 text-xs">
      <div className="flex flex-col pt-[2px]">
        <p className="ml-1 h-[15px] w-[110px] bg-[#eee] leading-4">RGB Levels</p>
        <RgbLevels />
        <div className="mt-[14px] ml-[2px] grid h-[74px] w-[192px] grid-cols-2 bg-[#f0f0f0] text-center font-['Liberation_Sans',Arial,sans-serif] text-[13px] leading-[17px] font-bold">
          <span>Measure</span>
          <span>Reference</span>
        </div>
        <p className="mt-[15px] ml-1 w-[43px] bg-[#eee] leading-4">Target</p>
        <div className="relative ml-9 h-[89px] w-[116px] border border-b-0 border-black bg-[conic-gradient(from_0deg,#40ff00_0deg,#ffc000_50deg,#ff0000_90deg,#ff0080_128deg,#8000c0_180deg,#0000ff_230deg,#0080c0_270deg,#00ff80_308deg,#40ff00_360deg)]">
          <svg className="absolute inset-0" width="114" height="88" viewBox="0 0 114 88" fill="none" stroke="#fff">
            <rect x="16.500" y="12.500" width="81" height="61" rx="8" fill="#000" />
            <path d="M57.500 13v61M15 43.500h85" strokeDasharray="4 3" />
            <ellipse cx="57.500" cy="43" rx="21" ry="15.500" strokeDasharray="4 3" />
          </svg>
        </div>
      </div>
      <div className="ml-[6px] min-w-0 flex-1">
        <p className="mt-px mr-[15px] ml-[10px] h-[15px] bg-[#eee] text-center leading-[15px]">Current Measure</p>
        <div className="mt-[8px] flex h-[578px] border-t-2 border-r border-b border-l-2 border-t-[#808080] border-r-white border-b-white border-l-[#808080] bg-[#a0a0a0] font-['Noto_Sans','Open_Sans',sans-serif]">
          <div className="flex-1">
            <table className="w-full table-fixed border-separate border-spacing-0">
              <tbody>
                {CURRENT_ROWS.map((r, i) => (
                  <tr key={i} className="h-[23px]">
                    <th className="w-[53px] border-r border-b border-[#696969] bg-[#f0f0f0] p-0 text-xs leading-4 whitespace-nowrap">{r}</th>
                    <td className={`border-r border-b border-[#c0c0c0] ${Math.floor(i / 3) % 2 ? 'bg-[#e0e0e0]' : 'bg-white'}`} />
                  </tr>
                ))}
              </tbody>
            </table>
          </div>
          <div className="flex w-[17px] flex-col items-center justify-between bg-[#f0f0f0] py-[4px]">
            <Arrow dir="up" />
            <Arrow dir="down" />
          </div>
        </div>
      </div>
    </Panel>
  );
}

function Information() {
  const frame = 'min-w-0 flex-1 border-3 border-t-[#808080] border-r-[#e8e8e8] border-b-[#f4f4f4] border-l-[#909090]';
  return (
    <Panel title="Information" className="min-w-0 flex-1" bodyClass="pt-[3px] pb-[6px] text-xs">
      <Combo
        label="Information graph"
        className="ml-[6px] w-[300px]"
        selectClass="border-r-[17px] border-transparent bg-[#0078d7] bg-clip-padding pl-[1px] text-xs text-white"
        options={['Saturation Luminance - Shift', 'Gamma', 'RGB Levels']}
      />
      <div className="mt-[8px] ml-[7px] flex gap-[2px]">
        <div className={frame}>
          <Plot id="lum" label="Saturation sweep luminance" title="Saturation Sweep Luminance" titleX="38%" grid={LUM_GRID} series={LUMINANCE} height={562} watermark />
        </div>
        <div className={frame}>
          <Plot id="shift" label="Saturation scan shifts" title="Saturation Scan Shifts" titleX="40%" grid={SHIFT_GRID} series={SHIFTS} height={281} zeroLine={140} />
          <Plot id="de" label="Saturation delta E" grid={DE_GRID} series={DELTA_E} height={281} watermark />
        </div>
      </div>
    </Panel>
  );
}

/* slanted edge between two sheet tabs */
function TabEdge({ kind }) {
  const art = {
    start: <><path d="M0 0h9v17z" fill="#fff" stroke="none" /><path d="M0 0l9 17" /></>,
    active: <><path d="M0 0h9L0 17z" fill="#fff" stroke="none" /><path d="M9 0L0 17M5 9l4 8" /></>,
    idle: <path d="M0 0l9 17M5 9L1 17" />,
    end: <path d="M9 0L0 17" />,
  }[kind];
  return <svg width="9" height="17" viewBox="0 0 9 17" stroke="#000" fill="none">{art}</svg>;
}

function SheetTabs() {
  const box = 'flex h-[17px] w-[17px] items-center justify-center border border-t-white border-r-[#696969] border-b-[#696969] border-l-white';
  const tab = 'h-[17px] border-b border-[#808080] text-[10px] leading-4';
  return (
    <div className="flex h-[19px] items-start border-t border-black bg-[#f0f0f0] font-['Liberation_Sans',Arial,sans-serif]">
      <div className="flex h-[18px] gap-px border-r border-b border-black">
        <button aria-label="Close tab" className={box}>
          <svg width="8" height="8" viewBox="0 0 8 8" stroke="#000" strokeWidth="1.500"><path d="M0 0l8 8M8 0L0 8" /></svg>
        </button>
        <button aria-label="Previous tab" className={box}><Arrow dir="left" color="#000" size={7} /></button>
        <button aria-label="Next tab" className={box}><Arrow dir="right" color="#000" size={7} /></button>
      </div>
      <TabEdge kind="start" />
      <button className={`${tab} w-[56px] bg-white font-bold`}>Measures</button>
      <TabEdge kind="active" />
      <button className={`${tab} w-[68px]`}>CIE Diagram</button>
      <TabEdge kind="idle" />
      <button className={`${tab} w-[96px]`}>Color temperature</button>
      <TabEdge kind="idle" />
      <button className={`${tab} w-[66px]`}>RGB Levels</button>
      <TabEdge kind="end" />
      <svg className="mt-[2px] ml-auto" width="14" height="14" viewBox="0 0 14 14">
        <path d="M0 0h14v9l-3 5H8l-2-4-2 3-4-4z" fill="#807800" stroke="#303000" />
        <path d="M3 1h7v7H3z" fill="#fff" />
        <path d="M4 3l2 2M8 2L5 7M9 4L8 7" stroke="#e00000" strokeWidth="1.500" />
        <path d="M8 9h5l-2 4H9z" fill="#ffe800" />
      </svg>
      <CheckBox label="Reference" className="mr-[4px] ml-[76px] h-[16px] text-xs" />
    </div>
  );
}

function StatusBar() {
  const cell = 'h-[17px] border border-t-[#98b0d0] border-r-white border-b-white border-l-[#98b0d0]';
  return (
    <footer className="flex h-[19px] items-center gap-[3px] bg-gradient-to-r from-[#e3ebf7] to-[#eff4fc] pl-[2px] font-['Open_Sans','Noto_Sans',sans-serif] text-[11px] text-[#101010]">
      <span className="flex-1">Ready</span>
      <span className={`${cell} w-[74px]`} />
      <span className={`${cell} w-[28px]`} />
      <span className={`${cell} w-[34px] text-center leading-4`}>NUM</span>
      <span className={`${cell} w-[32px]`} />
    </footer>
  );
}

export default function App() {
  return (
    <div className="min-h-screen bg-[#f0f0f0] font-['DejaVu_Sans',Verdana,sans-serif] text-black">
      <TitleBar />
      <MenuBar />
      <Toolbar />
      <div className="flex border-t-2 border-[#707070]">
        <main className="flex min-w-0 flex-1 flex-col gap-1 bg-[#868686] pt-[2px] pr-px pb-1 pl-[2px]">
          <TopRow />
          <div className="flex gap-px">
            <MeasureTable />
            <DisplayColumn />
          </div>
          <div className="flex gap-[2px]">
            <SelectedColor />
            <Information />
          </div>
        </main>
        <div className="flex w-[22px] shrink-0 justify-center border-l-2 border-white bg-[#f0f0f0] pt-[17px] pb-[44px]">
          <div className="w-[2px] bg-[#8a8a8a]" />
        </div>
      </div>
      <div className="flex h-[21px] items-center border-l-2 border-[#808080] pr-[77px] pl-[17px]">
        <div className="h-[2px] flex-1 bg-[#8a8a8a]" />
      </div>
      <SheetTabs />
      <StatusBar />
    </div>
  );
}
